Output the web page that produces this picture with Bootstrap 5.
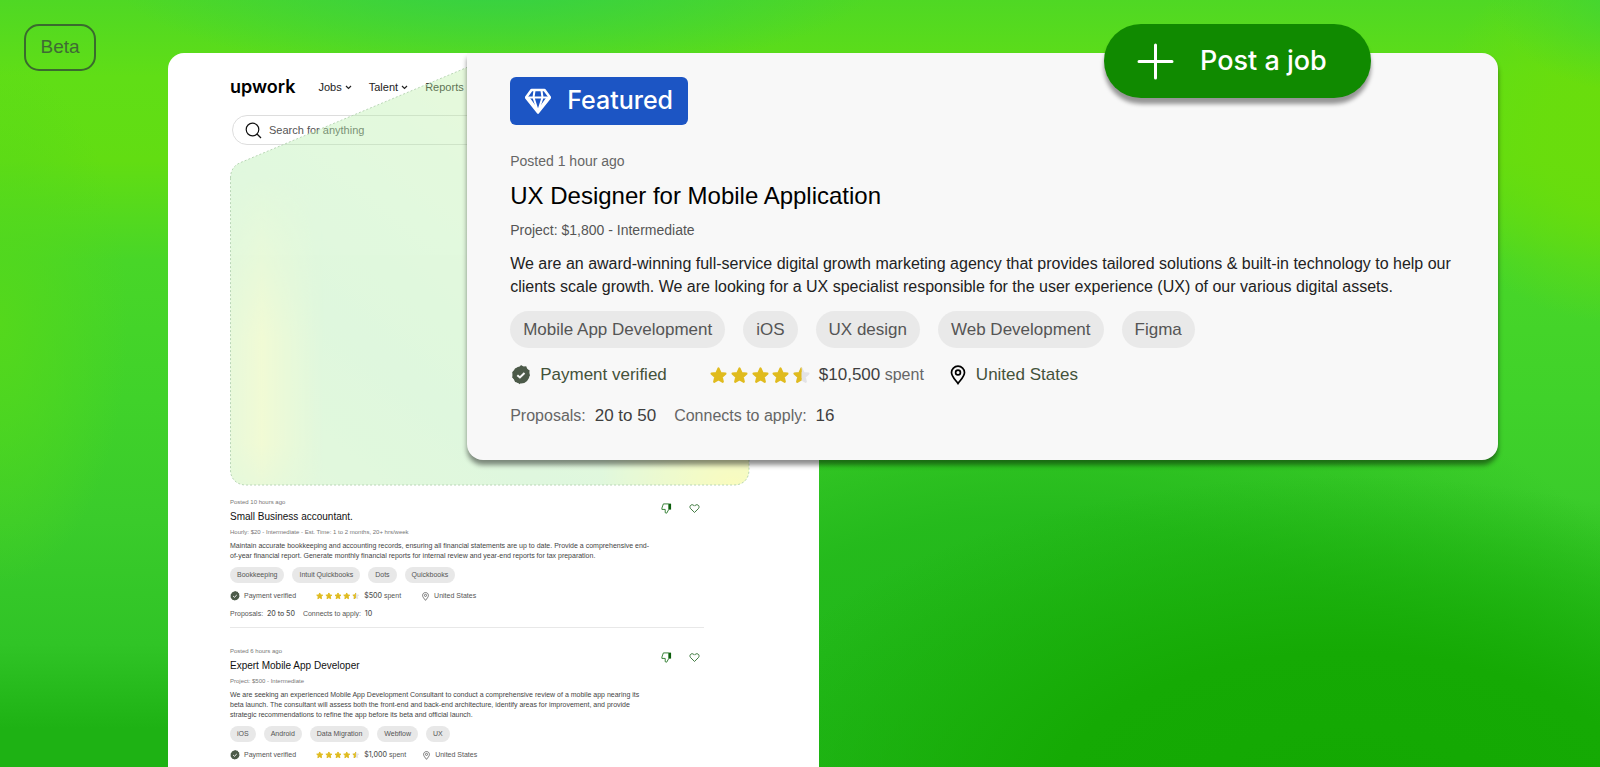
<!DOCTYPE html>
<html lang="en">
<head>
<meta charset="utf-8">
<meta name="viewport" content="width=device-width, initial-scale=1">
<title>Upwork – Post a job</title>
<link href="https://cdn.jsdelivr.net/npm/bootstrap@5.3.0/dist/css/bootstrap.min.css" rel="stylesheet">
<script src="https://cdn.jsdelivr.net/npm/bootstrap@5.3.0/dist/js/bootstrap.bundle.min.js" defer></script>
<style>
body{font-family:"Liberation Sans",Arial,sans-serif;color:#111;background:#34cb2c}
.hero{height:100vh;min-height:600px;padding-top:53px;
 background:
 radial-gradient(ellipse 40% 42% at 84% 104%,#13a802 0,#15aa04 45%,#15aa0400 100%),
 radial-gradient(ellipse 24% 13% at 31% -3%,#33d048 0,#33d04800 100%),
 radial-gradient(ellipse 9% 14% at 102% -2%,#3fd536 0,#3fd53600 100%),
 radial-gradient(ellipse 12% 24% at 101% 18%,#6add0c 0,#6add0cdd 40%,#6add0c00 100%),
 radial-gradient(ellipse 8% 34% at 0 42%,#54d81c 0,#54d81c00 100%),
 radial-gradient(ellipse 40% 45% at 65% 90%,#22b81a 0,#22b81add 50%,#22b81a00 100%),
 linear-gradient(180deg,#4fd824 0,#60de16 10%,#62dd12 21%,#48d628 34%,#40d22a 52%,#3acb2b 68%,#30c426 84%,#1eb214 95%,#1eb214 100%)}
.medium{font-family:Inter,"Liberation Sans",sans-serif;font-weight:500}
.beta{top:24px;left:24px;width:72px;height:47px;border:2px solid #3a6a2e;border-radius:15px;color:#3f6a35;font-size:19px}

.panel{margin-left:10.5%;width:40.7%;border-radius:16px 0 0 0;padding:22px 0 0 62px;overflow:hidden}
.topnav{height:24px;gap:17px;font-size:11px}
.topnav a{color:#222;text-decoration:none}
.topnav .logo{font-family:Inter,sans-serif;font-size:18px;font-weight:600;color:#000;line-height:24px;margin-right:6px}
.search{margin:16px 72px 0 2px;height:30px;border:1px solid #ddd;border-radius:15px;padding:0 12px;gap:7px}
.search input{font-size:11px;color:#555;border:0;background:none;outline:0;padding:0}
.search input::placeholder{color:#555;opacity:1}
.slot{height:341px;margin-bottom:11px}
.slot svg{left:0;bottom:0;pointer-events:none}
.jobs{width:474px}

.job{font-size:7px;color:#555;padding-bottom:8px;margin-bottom:18px;border-bottom:1px solid #e8e8e8}
.job .meta{font-size:6px;line-height:10px;margin:0;color:#777}
.job h3{font-size:10px;line-height:14px;margin:3px 0;color:#111;font-weight:400}
.job .about{font-size:7px;line-height:10px;margin:4px 0 6px;color:#444;width:422px}
.job .tag{font-size:7px;line-height:16px;padding:0 7px;border-radius:8px;background:#e8e8e8;color:#555}
.job .facts{line-height:10px;margin-top:8px}
.job .facts b{font-weight:500;font-family:Inter,sans-serif}
.job .far{margin-left:20px}
.job .acts{right:4px;top:6px;gap:17px}
.job button{line-height:0}

.feature{top:53px;left:29.2%;width:64.4%;height:407px;background:#f8f8f8;border-radius:0 16px 16px 16px;padding:24px 43px;box-shadow:0 5px 5px rgba(0,0,0,.45)}
.flag{background:#1c55c4;color:#fff;border-radius:6px;height:48px;padding:0 15px;gap:16px;font-size:25px}
.feature .posted{font-size:14px;line-height:20px;margin:26px 0 0;color:#666}
.feature h2{font-size:24px;line-height:30px;margin:10px 0 9px;font-weight:400;color:#000}
.feature .rate{font-size:14px;line-height:20px;margin:0;color:#555}
.feature .about{font-size:16px;line-height:23px;margin:12px 0 13px;color:#222}
.feature .tags{gap:18px}
.feature .tag{font-size:17px;line-height:37px;padding:0 13px;border-radius:19px;background:#e9e9e9;color:#555}
.feature .facts{font-size:16px;line-height:20px;margin-top:17px;color:#666}
.feature .facts b{font-size:17px;font-weight:400;color:#3f3f3f}
.feature .facts .olive{font-size:17px;color:#44523a}
.feature .far{margin-left:43px}
.feature .totals{margin-top:21px;gap:18px}
.post{top:24px;left:69%;height:74px;border-radius:37px;background:#108a00;color:#fff;border:0;padding:0 44px 0 33px;gap:26px;font-size:27px;box-shadow:0 6px 4px rgba(0,0,0,.4)}
</style>
</head>
<body>
<svg width="0" height="0" class="position-absolute" aria-hidden="true">
 <defs>
 <symbol id="check" viewBox="0 0 20 20"><path fill="#4c5a49" d="M10 .5l2.400 1.500 2.800-.2 1.100 2.600 2.400 1.500-.7 2.700.9 2.700-2.200 1.800-.7 2.700-2.800.2-1.900 2.100L10 17.600 8.700 19.700 6.800 17.900 4 17.500 3.300 14.800 1.100 13 2 10.300 1.300 7.600 3.700 6.100 4.800 3.500 7.600 3.700z" transform="translate(0 -.5)"/><circle cx="10" cy="9.800" r="8.600" fill="#4c5a49"/><path d="M6.300 10.200l2.600 2.300 4.600-4.500" fill="none" stroke="#f8f8f8" stroke-width="2"/></symbol>
 <symbol id="star" viewBox="0 0 17 17"><path d="M8.500 1.500l2 4.500 4.900.6-3.700 3.300 1.100 4.900-4.300-2.500L4.200 14.800l1.100-4.900L1.600 6.600l4.900-.6z" stroke-width="2.200" stroke-linejoin="round"/></symbol>
 <clipPath id="lefthalf"><path d="M0 0h8.500v17H0z"/></clipPath>
 <symbol id="rating" viewBox="0 0 101 17">
  <g fill="#e0bb1e" stroke="#e0bb1e"><use href="#star" width="17" height="17"/><use href="#star" x="21" width="17" height="17"/><use href="#star" x="42" width="17" height="17"/><use href="#star" x="62" width="17" height="17"/></g>
  <g transform="translate(83 0)"><use href="#star" width="17" height="17" fill="#e3e3e6" stroke="#e3e3e6"/><g clip-path="url(#lefthalf)"><use href="#star" width="17" height="17" fill="#e0bb1e" stroke="#e0bb1e"/></g></g>
 </symbol>
 <symbol id="pin" viewBox="0 0 16 20"><path d="M8 1.200c-3.700 0-6.500 2.800-6.500 6.300C1.500 11.300 5 14.500 8 18.600c3-4.100 6.500-7.300 6.500-11.100 0-3.500-2.800-6.300-6.500-6.300z" fill="none" stroke="currentColor" stroke-width="1.700"/><circle cx="8" cy="7.500" r="2.400" fill="none" stroke="currentColor" stroke-width="1.700"/></symbol>
 <symbol id="heart" viewBox="0 0 12 12"><path d="M6 10.300L1.800 6.200C.6 4.900.8 3 2.200 2.200 3.600 1.500 5 2 6 3.400 7 2 8.400 1.500 9.800 2.200 11.200 3 11.400 4.900 10.200 6.200z" fill="none" stroke="#2f6f2f" stroke-width="1"/></symbol>
 <symbol id="down" viewBox="0 0 12 12"><path d="M8.500 1H2.600L1 5.500V7h3.600v3.600l1.600.5L8.500 7z" fill="none" stroke="#2a7a2a" stroke-width="1"/><path d="M8.500.7H11v6.500H8.500z" fill="#0c5f0c"/></symbol>
 <symbol id="chev" viewBox="0 0 7 5"><path d="M1 1l2.500 2.500L6 1" fill="none" stroke="#222" stroke-width="1.200"/></symbol>
 </defs>
</svg>

<main class="hero position-relative overflow-hidden">
 <div class="beta position-absolute d-flex align-items-center justify-content-center">Beta</div>

 <section class="panel bg-white h-100">
  <nav class="topnav d-flex align-items-center">
   <a class="logo" href="#">upwork</a>
   <a href="#">Jobs <svg width="7" height="5"><use href="#chev"/></svg></a>
   <a href="#">Talent <svg width="7" height="5"><use href="#chev"/></svg></a>
   <a href="#">Reports</a>
  </nav>
  <label class="search d-flex align-items-center">
   <svg width="17" height="17" viewBox="0 0 17 17" fill="none" stroke="#111" stroke-width="1.200"><circle cx="7.500" cy="7.500" r="6.300"/><path d="M12 12l4 4"/></svg>
   <input type="text" class="flex-grow-1" placeholder="Search for anything" aria-label="Search for anything">
  </label>
  <div class="slot position-relative">
   <svg class="position-absolute" width="520" height="420" viewBox="0 0 520 420" aria-hidden="true">
    <defs>
     <linearGradient id="mint" x1="0" y1="1" x2="1" y2="0"><stop offset="0" stop-color="#b8efa8"/><stop offset=".3" stop-color="#aeedab"/><stop offset=".6" stop-color="#b8f0a8"/><stop offset="1" stop-color="#cdf09c"/></linearGradient>
     <linearGradient id="lemonL"><stop offset="0" stop-color="#e2f595" stop-opacity=".4"/><stop offset=".06" stop-color="#eef78c" stop-opacity=".7"/><stop offset=".18" stop-color="#e2f595" stop-opacity="0"/></linearGradient>
     <linearGradient id="fade" x2="0" y2="1"><stop offset=".25" stop-color="#000"/><stop offset=".65" stop-color="#fff"/><stop offset=".9" stop-color="#fff"/><stop offset="1" stop-color="#777"/></linearGradient>
     <mask id="fadeL"><path fill="url(#fade)" d="M0 0h520v420H0z"/></mask>
     <radialGradient id="lemonR" cx=".97" cy="1" r=".26"><stop offset="0" stop-color="#f2f85c"/><stop offset="1" stop-color="#f2f85c" stop-opacity="0"/></radialGradient>
     <path id="beam" d="M.5 112c0-7 3-12 9-15L238 1h281v403c0 9-6 15-15 15H16c-9 0-15.500-6-15.500-15z"/>
    </defs>
    <g opacity=".39"><use href="#beam" fill="url(#mint)"/><use href="#beam" fill="url(#lemonL)" mask="url(#fadeL)"/><use href="#beam" fill="url(#lemonR)"/></g>
    <use href="#beam" fill="none" stroke="#b9d6b6" stroke-dasharray="2 2"/>
   </svg>
  </div>

  <div class="jobs">
   <article class="job position-relative">
    <div class="acts position-absolute d-flex"><button type="button" class="btn p-0 border-0" aria-label="Not interested"><svg width="11" height="11"><use href="#down"/></svg></button><button type="button" class="btn p-0 border-0" aria-label="Save job"><svg width="11" height="11"><use href="#heart"/></svg></button></div>
    <p class="meta">Posted 10 hours ago</p>
    <h3>Small Business accountant.</h3>
    <p class="meta">Hourly: $20 - Intermediate - Est. Time: 1 to 2 months, 20+ hrs/week</p>
    <p class="about">Maintain accurate bookkeeping and accounting records, ensuring all financial statements are up to date. Provide a comprehensive end-<br>of-year financial report. Generate monthly financial reports for internal review and year-end reports for tax preparation.</p>
    <div class="d-flex gap-2"><span class="tag">Bookkeeping</span><span class="tag">Intuit Quickbooks</span><span class="tag">Dots</span><span class="tag">Quickbooks</span></div>
    <div class="facts d-flex align-items-center"><svg width="10" height="10"><use href="#check"/></svg><span class="ms-1">Payment verified</span><svg class="far" width="44" height="8"><use href="#rating"/></svg><span class="ms-1"><b>$500</b> spent</span><svg class="far" width="9" height="9"><use href="#pin"/></svg><span class="ms-1">United States</span></div>
    <div class="facts d-flex gap-2"><span>Proposals: &nbsp;<b>20 to 50</b></span><span>Connects to apply: &nbsp;<b>10</b></span></div>
   </article>
   <article class="job position-relative">
    <div class="acts position-absolute d-flex"><button type="button" class="btn p-0 border-0" aria-label="Not interested"><svg width="11" height="11"><use href="#down"/></svg></button><button type="button" class="btn p-0 border-0" aria-label="Save job"><svg width="11" height="11"><use href="#heart"/></svg></button></div>
    <p class="meta">Posted 6 hours ago</p>
    <h3>Expert Mobile App Developer</h3>
    <p class="meta">Project: $500 - Intermediate</p>
    <p class="about">We are seeking an experienced Mobile App Development Consultant to conduct a comprehensive review of a mobile app nearing its<br>beta launch. The consultant will assess both the front-end and back-end architecture, identify areas for improvement, and provide<br>strategic recommendations to refine the app before its beta and official launch.</p>
    <div class="d-flex gap-2"><span class="tag">iOS</span><span class="tag">Android</span><span class="tag">Data Migration</span><span class="tag">Webflow</span><span class="tag">UX</span></div>
    <div class="facts d-flex align-items-center"><svg width="10" height="10"><use href="#check"/></svg><span class="ms-1">Payment verified</span><svg class="far" width="44" height="8"><use href="#rating"/></svg><span class="ms-1"><b>$1,000</b> spent</span><svg class="ms-3" width="9" height="9"><use href="#pin"/></svg><span class="ms-1">United States</span></div>
   </article>
  </div>
 </section>

 <section class="feature position-absolute">
  <div class="flag medium d-inline-flex align-items-center">
   <svg width="26" height="26" viewBox="0 0 26 26" fill="none" stroke="#fff" stroke-width="2.600" stroke-linejoin="round"><path d="M6.500 2h13L25 9.500 13 24.500 1 9.500z"/><path d="M1.500 9.500h23M9.500 2.500L8.500 9.500l4.500 14 4.500-14-1-7" stroke-width="2"/><path d="M3.500 10l9.500 13M22.500 10L13 23" stroke-width="2.400"/></svg>
   Featured
  </div>
  <p class="posted">Posted 1 hour ago</p>
  <h2>UX Designer for Mobile Application</h2>
  <p class="rate">Project: $1,800 - Intermediate</p>
  <p class="about">We are an award-winning full-service digital growth marketing agency that provides tailored solutions &amp; built-in technology to help our clients scale growth. We are looking for a UX specialist responsible for the user experience (UX) of our various digital assets.</p>
  <div class="tags d-flex"><span class="tag">Mobile App Development</span><span class="tag">iOS</span><span class="tag">UX design</span><span class="tag">Web Development</span><span class="tag">Figma</span></div>
  <div class="facts d-flex align-items-center"><svg width="22" height="20"><use href="#check"/></svg><span class="olive ms-2">Payment verified</span><svg class="far" width="101" height="17"><use href="#rating"/></svg><span class="ms-2"><b>$10,500</b> spent</span><svg class="ms-4 text-black" width="20" height="20"><use href="#pin"/></svg><span class="olive ms-2">United States</span></div>
  <div class="facts totals d-flex"><span>Proposals: &nbsp;<b>20 to 50</b></span><span>Connects to apply: &nbsp;<b>16</b></span></div>
 </section>

 <button type="button" class="post medium position-absolute d-flex align-items-center">
  <svg width="37" height="37" viewBox="0 0 37 37" stroke="#fff" stroke-width="3" stroke-linecap="round"><path d="M18.500 2v33M2 18.500h33"/></svg>Post a job
 </button>
</main>
</body>
</html>
